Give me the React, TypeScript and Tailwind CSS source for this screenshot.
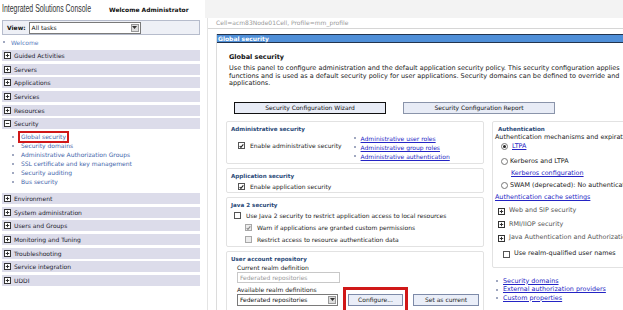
import React from "react";

const navTop = ["Guided Activities", "Servers", "Applications", "Services", "Resources"];
const navBottom = [
  "Environment",
  "System administration",
  "Users and Groups",
  "Monitoring and Tuning",
  "Troubleshooting",
  "Service integration",
  "UDDI",
];
const securityLinks = [
  "Security domains",
  "Administrative Authorization Groups",
  "SSL certificate and key management",
  "Security auditing",
  "Bus security",
];

const BoxIcon = ({ open }: { open?: boolean }) => (
  <svg width="7" height="7" viewBox="0 0 7 7" className="shrink-0">
    <rect x="0.5" y="0.5" width="6" height="6" fill="#fff" stroke="#333" />
    <path d="M1.8 3.5h3.4" stroke="#333" />
    {!open && <path d="M3.5 1.8v3.4" stroke="#333" />}
  </svg>
);

const NavBar = ({ label, open }: { label: string; open?: boolean }) => (
  <div className="h-[11px] mb-[2.7px] bg-[#dcdcea] flex items-center gap-[3px] pl-[2px] text-[6px] text-[#22222e] whitespace-nowrap">
    <BoxIcon open={open} />
    <span>{label}</span>
  </div>
);

const Check = ({ checked, disabled }: { checked?: boolean; disabled?: boolean }) => (
  <span
    className={`inline-flex shrink-0 w-[7px] h-[7px] border items-center justify-center ${
      disabled ? "border-[#a8a8a8] bg-[#ececec]" : "border-[#555] bg-white"
    }`}
  >
    {checked && (
      <svg width="6" height="6" viewBox="0 0 6 6">
        <path d="M0.8 3l1.5 1.6L5.2 1" fill="none" stroke={disabled ? "#888" : "#222"} strokeWidth="1.3" />
      </svg>
    )}
  </span>
);

const Radio = ({ on }: { on?: boolean }) => (
  <span className="inline-flex shrink-0 w-[7px] h-[7px] rounded-full border border-[#777] bg-white items-center justify-center">
    {on && <span className="w-[3px] h-[3px] rounded-full bg-[#222]" />}
  </span>
);

const Link = ({ children }: { children: React.ReactNode }) => (
  <span className="text-[#2424c4] underline">{children}</span>
);

const Bullet = () => <span className="inline-block w-[2px] h-[2px] bg-[#a0a8c0] shrink-0" />;

const Box = ({ title, className, children }: { title: string; className?: string; children: React.ReactNode }) => (
  <div className={`border border-[#e2e2e2] rounded-[2px] px-[4px] pt-[3px] ${className ?? ""}`}>
    <div className="text-[5.6px] font-bold text-[#2a4a78] leading-[8px]">{title}</div>
    {children}
  </div>
);

const SelectBox = ({ value, width }: { value: string; width: string }) => (
  <div className={`h-[12px] shrink-0 border border-[#7a7a7a] bg-white flex items-center ${width}`}>
    <span className="flex-1 pl-[2px] text-[6px] text-[#111] whitespace-nowrap">{value}</span>
    <span className="w-[8px] h-[8px] mr-[1px] bg-[#ddd] border border-[#999] flex items-center justify-center">
      <svg width="5" height="3" viewBox="0 0 5 3">
        <path d="M0 0h5L2.5 3z" fill="#333" />
      </svg>
    </span>
  </div>
);

export default function App() {
  return (
    <div className="w-[623px] h-[310px] overflow-hidden bg-white flex flex-col font-['DejaVu_Sans',Verdana,sans-serif]">
      <header className="h-[18px] shrink-0 flex">
        <div className="w-[205px] bg-white flex items-center pl-[2px] whitespace-nowrap">
          <span className="inline-block origin-left scale-x-[0.66] text-[10.5px] text-[#333] font-['Liberation_Sans',Arial,sans-serif] w-[104px]">
            Integrated Solutions Console
          </span>
          <span className="ml-[3px] text-[6px] font-bold text-[#111]">Welcome Administrator</span>
        </div>
        <div className="flex-1 bg-[#f3f3f3]" />
      </header>

      <div className="flex flex-1 min-h-0">
        <aside className="w-[205px] shrink-0 pl-[2px] pr-[5px] pt-[2px]">
          <div className="h-[15px] bg-[#eef0f6] border border-[#b6bccc] flex items-center pl-[4px] gap-[3px]">
            <span className="text-[6px] font-bold text-[#111]">View:</span>
            <SelectBox value="All tasks" width="w-[112px]" />
          </div>
          <div className="h-[10px] mt-[2px] mb-[3px] flex items-center gap-[6px] pl-[1px] text-[6px] text-[#5a7ec0]">
            <Bullet />
            <span>Welcome</span>
          </div>
          {navTop.map(n => (
            <NavBar key={n} label={n} />
          ))}
          <NavBar label="Security" open />
          <div className="pb-[6.8px] -mt-[2.7px] pt-[2.7px]">
            <div className="h-[9px] flex items-center pl-[10px] text-[6px] text-[#4466aa] whitespace-nowrap">
              <Bullet />
              <span className="ml-[4px] h-[12px] border-2 border-[#d01818] flex items-center px-[1px]">Global security</span>
            </div>
            {securityLinks.map(s => (
              <div key={s} className="h-[9px] flex items-center gap-[7px] pl-[10px] text-[6px] text-[#4466aa] whitespace-nowrap">
                <Bullet />
                <span>{s}</span>
              </div>
            ))}
          </div>
          {navBottom.map(n => (
            <NavBar key={n} label={n} />
          ))}
        </aside>

        <main className="flex-1 min-w-0 overflow-hidden border-l border-[#e4e4e4] ml-[2px]">
          <div className="h-[11px] border-b border-[#d6d6d6] flex items-end pl-[8px] pb-[1px] text-[6px] text-[#9a9a9a] whitespace-nowrap">
            Cell=acm83Node01Cell, Profile=mm_profile
          </div>
          <div className="ml-[8px] mt-[5px] border-l border-[#dcdcdc]">
            <div className="h-[9px] bg-[#4f8fd8] border-y border-[#22344e] flex items-center pl-[1px] text-[6px] font-bold text-white whitespace-nowrap">
              Global security
            </div>
            <div className="pl-[9px] whitespace-nowrap">
              <div className="pl-[3px] mt-[10px] text-[6.5px] font-bold text-[#111] leading-[8px]">Global security</div>
              <div className="pl-[3px] mt-[4px] text-[6.5px] text-[#222] leading-[7.6px]">
                <div>Use this panel to configure administration and the default application security policy. This security configuration applies</div>
                <div>functions and is used as a default security policy for user applications. Security domains can be defined to override and</div>
                <div>applications.</div>
              </div>
              <div className="flex mt-[14px] ml-[8px] gap-[17px]">
                <div className="w-[152px] h-[12px] border border-[#111] bg-[#e8ecf6] flex items-center justify-center text-[6px] text-[#111]">
                  Security Configuration Wizard
                </div>
                <div className="w-[152px] h-[12px] border border-[#8a94aa] bg-[#e8ecf6] flex items-center justify-center text-[6px] text-[#111]">
                  Security Configuration Report
                </div>
              </div>

              <div className="flex gap-[8px] mt-[7px]">
                <div className="w-[258px] shrink-0 flex flex-col gap-[4px]">
                  <Box title="Administrative security" className="h-[43px]">
                    <div className="flex text-[6px] text-[#222] pl-[7px]">
                      <div className="flex items-center gap-[5px] h-[8px] mt-[9px]">
                        <Check checked />
                        <span>Enable administrative security</span>
                      </div>
                      <div className="ml-[12px] leading-[9px] mt-[1px]">
                        {["Administrative user roles", "Administrative group roles", "Administrative authentication"].map(l => (
                          <div key={l} className="flex items-center gap-[5px]">
                            <Bullet />
                            <Link>{l}</Link>
                          </div>
                        ))}
                      </div>
                    </div>
                  </Box>
                  <Box title="Application security" className="h-[25px]">
                    <div className="flex items-center gap-[5px] h-[8px] mt-[3px] pl-[7px] text-[6px] text-[#222]">
                      <Check checked />
                      <span>Enable application security</span>
                    </div>
                  </Box>
                  <Box title="Java 2 security" className="h-[50px]">
                    <div className="text-[6px] text-[#222] leading-[12px] mt-[1px]">
                      <div className="flex items-center gap-[5px] pl-[3px]">
                        <Check />
                        <span>Use Java 2 security to restrict application access to local resources</span>
                      </div>
                      <div className="flex items-center gap-[5px] pl-[14px]">
                        <Check checked disabled />
                        <span>Warn if applications are granted custom permissions</span>
                      </div>
                      <div className="flex items-center gap-[5px] pl-[14px]">
                        <Check disabled />
                        <span>Restrict access to resource authentication data</span>
                      </div>
                    </div>
                  </Box>
                  <Box title="User account repository" className="h-[70px]">
                    <div className="pl-[6px] text-[6px] text-[#222]">
                      <div className="leading-[9px]">Current realm definition</div>
                      <div className="w-[103px] h-[11px] border border-[#c8c8c8] bg-white flex items-center pl-[2px] text-[#999]">
                        Federated repositories
                      </div>
                      <div className="leading-[8px] mt-[3px]">Available realm definitions</div>
                      <div className="flex items-start h-[12px]">
                        <SelectBox value="Federated repositories" width="w-[101px]" />
                        <span className="ml-[5px] -mt-[7px] border-[3px] border-[#d01818] pt-[4px] pb-[4px] px-[2px] flex">
                          <span className="w-[55px] h-[12px] border border-[#7d8aa8] bg-[#eaeef8] flex items-center justify-center">
                            Configure...
                          </span>
                        </span>
                        <span className="ml-[5px] w-[71px] h-[12px] border border-[#7d8aa8] bg-[#eaeef8] flex items-center justify-center">
                          Set as current
                        </span>
                      </div>
                    </div>
                  </Box>
                </div>

                <div className="w-[160px] shrink-0 text-[6.4px] text-[#222]">
                  <div className="h-[147px] border border-[#e2e2e2] rounded-[2px] pl-[2px] pt-[3px]">
                    <div className="pl-[3px] text-[5.6px] font-bold text-[#2a4a78] leading-[8px]">Authentication</div>
                    <div className="leading-[8px]">Authentication mechanisms and expiration</div>
                    <div className="flex items-center gap-[4px] pl-[6px] h-[8px] mt-[2px]">
                      <Radio on />
                      <Link>LTPA</Link>
                    </div>
                    <div className="flex items-center gap-[2px] pl-[6px] h-[8px] mt-[7px]">
                      <Radio />
                      <span>Kerberos and LTPA</span>
                    </div>
                    <div className="pl-[16px] h-[8px] mt-[4px] flex items-center">
                      <Link>Kerberos configuration</Link>
                    </div>
                    <div className="flex items-center gap-[2px] pl-[6px] h-[8px] mt-[4px]">
                      <Radio />
                      <span>SWAM (deprecated): No authentication</span>
                    </div>
                    <div className="h-[8px] mt-[4px] flex items-center">
                      <Link>Authentication cache settings</Link>
                    </div>
                    {["Web and SIP security", "RMI/IIOP security", "Java Authentication and Authorization"].map(t => (
                      <div key={t} className="flex items-center gap-[4px] pl-[3px] h-[8px] mt-[5.5px] text-[#555]">
                        <BoxIcon />
                        <span>{t}</span>
                      </div>
                    ))}
                    <div className="flex items-center gap-[4px] pl-[8px] h-[8px] mt-[8px]">
                      <Check />
                      <span>Use realm-qualified user names</span>
                    </div>
                  </div>
                  <div className="mt-[9px] pl-[4px] leading-[8.5px]">
                    {["Security domains", "External authorization providers", "Custom properties"].map(l => (
                      <div key={l} className="flex items-center gap-[5px]">
                        <Bullet />
                        <Link>{l}</Link>
                      </div>
                    ))}
                  </div>
                </div>
              </div>
            </div>
          </div>
        </main>
      </div>
    </div>
  );
}
